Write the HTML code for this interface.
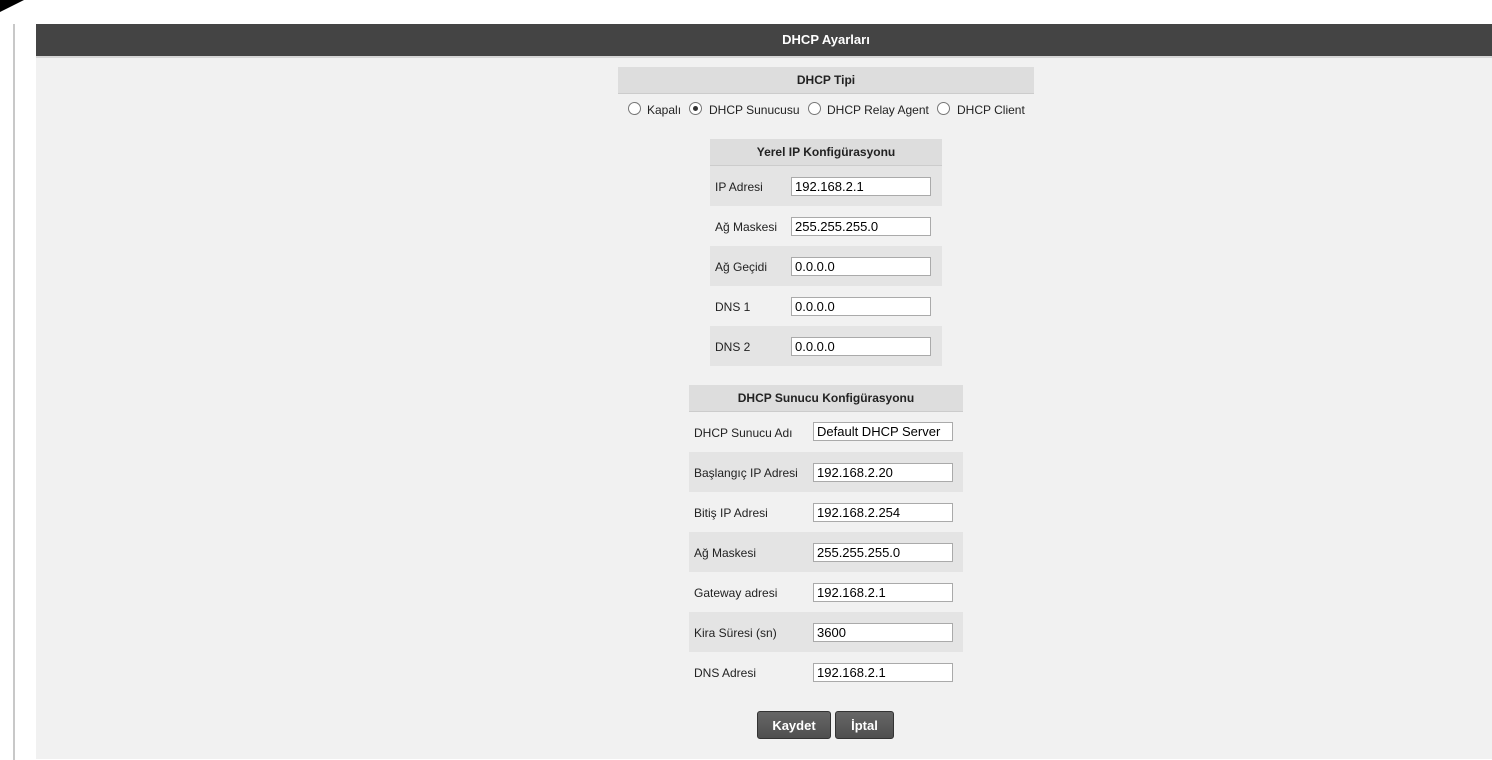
<!DOCTYPE html>
<html><head><meta charset="utf-8"><style>
*{margin:0;padding:0;box-sizing:border-box}
body{width:1492px;height:760px;background:#fff;position:relative;overflow:hidden;font-family:"Liberation Sans",Arial,sans-serif;font-size:12px;color:#222}
.a{position:absolute}
.hdr{left:36px;top:24px;width:1456px;height:32px;background:#444;color:#fff;font-weight:bold;font-size:13px;text-align:center;line-height:32px;padding-left:124px}
.cont{left:36px;top:56px;width:1456px;height:703px;background:#f1f1f1;border-top:2px solid #d6d6d6}
.th{background:#ddd;border-bottom:1px solid #ccc;font-weight:bold;text-align:center;font-size:12px}
.row{height:40px}
.dk{background:#e4e4e4}
.lbl{position:absolute;top:1px;line-height:40px;font-size:12px}
.inp{position:absolute;height:19px;background:#fff;border:1px solid #aaa;font-size:13px;line-height:17px;padding-left:3px;color:#000}
.rad{position:absolute;width:13px;height:13px;border:1px solid #777;border-radius:50%;background:#fff;top:102px}
.rad.on:after{content:"";position:absolute;left:3px;top:3px;width:5px;height:5px;border-radius:50%;background:#333}
.rt{position:absolute;top:103px;font-size:12px;line-height:14px}
.btn{position:absolute;top:711px;height:28px;background:linear-gradient(#666,#4f4f4f);border:1px solid #333;border-radius:3px;color:#fff;font-weight:bold;font-size:13px;text-align:center;line-height:28px;font-family:"Liberation Sans",sans-serif}
</style></head><body>
<div class="a" style="left:0;top:0;width:0;height:0;border-top:12px solid #000;border-right:24px solid transparent"></div>
<div class="a" style="left:13px;top:24px;width:2px;height:736px;background:#c8c8c8"></div>
<div class="a hdr">DHCP Ayarları</div>
<div class="a cont"></div>

<div class="a th" style="left:618px;top:67px;width:416px;height:27px;line-height:26px">DHCP Tipi</div>
<div class="rad" style="left:628px"></div><span class="rt" style="left:647px">Kapalı</span>
<div class="rad on" style="left:689px"></div><span class="rt" style="left:709px">DHCP Sunucusu</span>
<div class="rad" style="left:808px"></div><span class="rt" style="left:827px">DHCP Relay Agent</span>
<div class="rad" style="left:937px"></div><span class="rt" style="left:957px">DHCP Client</span>

<div class="a" style="left:710px;top:139px;width:232px">
<div class="th" style="height:27px;line-height:26px">Yerel IP Konfigürasyonu</div>
<div class="row dk" style="position:relative"><span class="lbl" style="left:5px">IP Adresi</span><div class="inp" style="left:81px;top:11px;width:140px">192.168.2.1</div></div>
<div class="row" style="position:relative"><span class="lbl" style="left:5px">Ağ Maskesi</span><div class="inp" style="left:81px;top:11px;width:140px">255.255.255.0</div></div>
<div class="row dk" style="position:relative"><span class="lbl" style="left:5px">Ağ Geçidi</span><div class="inp" style="left:81px;top:11px;width:140px">0.0.0.0</div></div>
<div class="row" style="position:relative"><span class="lbl" style="left:5px">DNS 1</span><div class="inp" style="left:81px;top:11px;width:140px">0.0.0.0</div></div>
<div class="row dk" style="position:relative"><span class="lbl" style="left:5px">DNS 2</span><div class="inp" style="left:81px;top:11px;width:140px">0.0.0.0</div></div>
</div>

<div class="a" style="left:689px;top:385px;width:274px">
<div class="th" style="height:27px;line-height:26px">DHCP Sunucu Konfigürasyonu</div>
<div class="row" style="position:relative"><span class="lbl" style="left:5px">DHCP Sunucu Adı</span><div class="inp" style="left:124px;top:10px;width:140px">Default DHCP Server</div></div>
<div class="row dk" style="position:relative"><span class="lbl" style="left:5px">Başlangıç IP Adresi</span><div class="inp" style="left:124px;top:11px;width:140px">192.168.2.20</div></div>
<div class="row" style="position:relative"><span class="lbl" style="left:5px">Bitiş IP Adresi</span><div class="inp" style="left:124px;top:11px;width:140px">192.168.2.254</div></div>
<div class="row dk" style="position:relative"><span class="lbl" style="left:5px">Ağ Maskesi</span><div class="inp" style="left:124px;top:11px;width:140px">255.255.255.0</div></div>
<div class="row" style="position:relative"><span class="lbl" style="left:5px">Gateway adresi</span><div class="inp" style="left:124px;top:11px;width:140px">192.168.2.1</div></div>
<div class="row dk" style="position:relative"><span class="lbl" style="left:5px">Kira Süresi (sn)</span><div class="inp" style="left:124px;top:11px;width:140px">3600</div></div>
<div class="row" style="position:relative"><span class="lbl" style="left:5px">DNS Adresi</span><div class="inp" style="left:124px;top:11px;width:140px">192.168.2.1</div></div>
</div>

<div class="btn" style="left:757px;width:74px">Kaydet</div>
<div class="btn" style="left:835px;width:59px">İptal</div>
</body></html>
